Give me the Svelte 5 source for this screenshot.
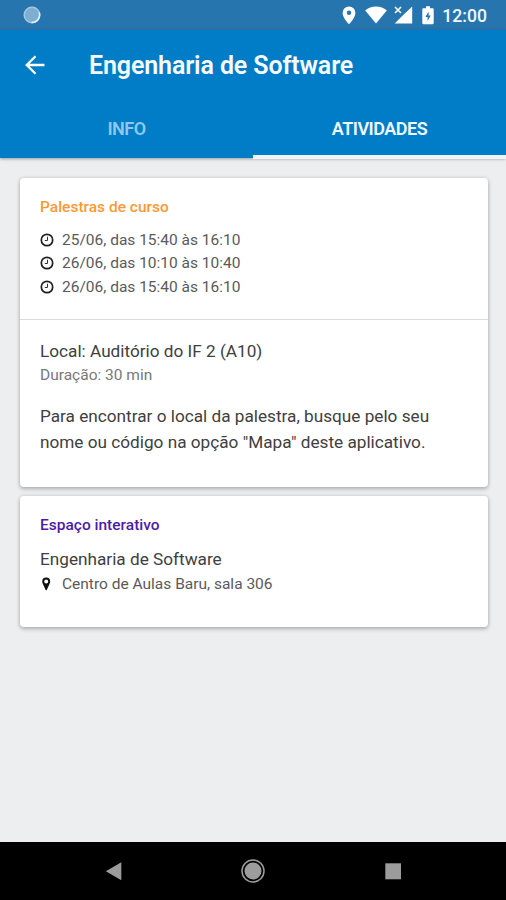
<script>
  const tabs = [
    { id: 'info', label: 'INFO' },
    { id: 'atividades', label: 'ATIVIDADES' }
  ];
  let active = $state('atividades');

  const times = [
    '25/06, das 15:40 às 16:10',
    '26/06, das 10:10 às 10:40',
    '26/06, das 15:40 às 16:10'
  ];
</script>

<div class="screen">
  <div class="status">
    <svg class="spinner" viewBox="0 0 18 18">
      <circle cx="9" cy="9" r="7.8" fill="#7eaed3" stroke="#a6c7e0" stroke-width="1.4" />
      <path d="M16.2 6.500A7.700 7.700 0 0 1 8.500 16.600" fill="none" stroke="#e2eff8" stroke-width="1.500" />
    </svg>
    <div class="status-icons">
      <svg width="14" height="19" viewBox="0 0 14 19">
        <path fill="#fff" fill-rule="evenodd" d="M7 .5A6.400 6.400 0 0 0 .6 6.900C.6 11.500 7 18.300 7 18.300s6.400-6.800 6.400-11.400A6.400 6.400 0 0 0 7 .5zm0 4.100a2.200 2.200 0 1 1 0 4.400 2.200 2.200 0 0 1 0-4.400z" />
      </svg>
      <svg class="wifi" width="22" height="18" viewBox="0 0 22 18">
        <path fill="#fff" d="M11 17.500.2 4.400C3.100 1.800 7 .5 11 .5s7.900 1.300 10.800 3.900z" />
      </svg>
      <svg class="signal" width="19" height="18" viewBox="0 0 19 18">
        <path fill="#fff" d="M18.200.5v17H.7l8.500-8.500z" />
        <path stroke="#fff" stroke-width="1.600" d="m1 1 6 6m0-6L1 7" />
      </svg>
      <svg class="battery" width="12" height="19" viewBox="0 0 12 19">
        <path fill="#fff" fill-rule="evenodd" d="M4 .3h4v1.900h2.500c.7 0 1.200.5 1.200 1.200v13.700c0 .7-.5 1.200-1.200 1.200h-9c-.7 0-1.200-.5-1.200-1.200V3.400c0-.7.500-1.200 1.200-1.200H4zm2.600 5.100-3.200 5.700h2.200v4l3.100-5.700H6.600z" />
      </svg>
      <span class="clock">12:00</span>
    </div>
  </div>

  <header>
    <div class="toolbar">
      <svg class="back" width="20" height="20" viewBox="0 0 20 20">
        <path d="M19.500 10H2M10.500 1.200 1.700 10l8.800 8.800" fill="none" stroke="#fff" stroke-width="2.300" />
      </svg>
      <h1>Engenharia de Software</h1>
    </div>
    <nav class="tabs">
      {#each tabs as tab}
        <button class:active={active === tab.id} onclick={() => (active = tab.id)}><span>{tab.label}</span></button>
      {/each}
    </nav>
  </header>

  <main>
    <section class="card talks">
      <div class="card-top">
        <h2 class="orange">Palestras de curso</h2>
        {#each times as time}
          <div class="row">
            <svg width="14" height="14" viewBox="0 0 14 14">
              <circle cx="7" cy="7" r="5.700" fill="none" stroke="#222" stroke-width="1.700" />
              <path d="M7.500 3.700v3.800H4.800" fill="none" stroke="#333" stroke-width="1" />
            </svg>
            <span class="time">{time}</span>
          </div>
        {/each}
      </div>
      <div class="card-body">
        <p class="place">Local: Auditório do IF 2 (A10)</p>
        <p class="duration">Duração: 30 min</p>
        <p class="note">Para encontrar o local da palestra, busque pelo seu<br />nome ou código na opção "Mapa" deste aplicativo.</p>
      </div>
    </section>

    <section class="card space">
      <h2 class="purple">Espaço interativo</h2>
      <p class="course">Engenharia de Software</p>
      <div class="row">
        <svg width="14" height="14" viewBox="0 0 14 14">
          <path fill="#111" fill-rule="evenodd" d="M6.200.5A4 4 0 0 0 2.200 4.500c0 .8.200 1.500.5 2l2.800 6.200c.3.700 1.100.7 1.400 0l2.800-6.200c.3-.5.500-1.200.5-2a4 4 0 0 0-4-4zm0 2a2 2 0 1 1 0 4 2 2 0 0 1 0-4z" />
        </svg>
        <span class="room">Centro de Aulas Baru, sala 306</span>
      </div>
    </section>
  </main>

  <footer>
    <svg width="24" height="24" viewBox="0 0 24 24"><path fill="#9c9c9c" d="M20.300 3.300v18L4.800 12.300z" /></svg>
    <svg width="24" height="24" viewBox="0 0 24 24">
      <circle cx="12" cy="12" r="11" fill="none" stroke="#9c9c9c" stroke-width="1.500" />
      <circle cx="12" cy="12" r="8.500" fill="#9c9c9c" />
    </svg>
    <svg width="24" height="24" viewBox="0 0 24 24"><path fill="#9c9c9c" d="M4.300 4.300h15.700v16H4.300z" /></svg>
  </footer>
</div>

<style>
  :global(body) { margin: 0; background: #eceef0; }
  .screen { display: flex; flex-direction: column; width: 506px; height: 900px; overflow: hidden; background: #eceef0; font-family: Roboto, "Liberation Sans", sans-serif; color: #404040; }
  svg { display: block; flex: none; }
  h1, h2, p { margin: 0; }

  .status { display: flex; align-items: center; justify-content: space-between; box-sizing: border-box; height: 30px; padding: 0 19px 0 23px; background: #2775af; }
  .spinner { width: 18px; height: 18px; }
  .status-icons { display: flex; align-items: center; }
  .wifi { margin-left: 9px; }
  .signal { margin-left: 7px; }
  .battery { margin-left: 9px; }
  .clock { margin-left: 8px; padding-top: 2px; font-size: 17.600px; line-height: 22px; font-weight: 500; color: #f3f8fc; }

  header { position: relative; height: 128px; background: #007dc6; box-shadow: 0 1px 3px rgba(0, 0, 0, 0.35); }
  .toolbar { display: flex; align-items: center; height: 70px; padding-left: 25px; }
  .back { margin-bottom: 1px; }
  h1 { margin-left: 44px; padding-top: 1px; font-size: 25px; letter-spacing: -0.12px; font-weight: 600; color: #f6faff; white-space: nowrap; }
  .tabs { display: grid; grid-template-columns: 1fr 1fr; height: 59px; }
  .tabs button { border: 0; border-bottom: 4px solid transparent; padding: 2px 0 0; background: none; font: inherit; font-size: 18px; letter-spacing: -0.5px; font-weight: 600; color: #8fc8ed; }
  .tabs button.active { color: #f0f8ff; border-bottom-color: #f0f4f6; }

  main { flex: 1; padding: 20px 18px 0 20px; }
  .card { border-radius: 4px; background: #fff; box-shadow: 0 2px 4px rgba(0, 0, 0, 0.24), 0 0 4px rgba(0, 0, 0, 0.12); }
  .card-top { box-sizing: border-box; height: 142px; padding: 19px 20px 0; border-bottom: 1px solid #d9dcdd; }
  .card-body { box-sizing: border-box; height: 167px; padding: 19px 20px 0; }
  h2 { height: 20px; margin-bottom: 11px; font-size: 15.500px; line-height: 20px; font-weight: 500; }
  .orange { color: #fb9a32; }
  .purple { color: #4f1ba6; }
  .row { display: flex; align-items: center; gap: 8px; height: 23.500px; font-size: 15.500px; white-space: nowrap; color: #5a5a5a; }
  .place, .course { font-size: 17.200px; line-height: 24px; white-space: nowrap; }
  .duration { font-size: 15.500px; line-height: 24px; color: #787878; }
  .note { margin-top: 16px; font-size: 17.200px; line-height: 26px; white-space: nowrap; }
  .space { box-sizing: border-box; height: 131px; margin-top: 9px; padding: 19px 20px 0; }
  .course { padding-top: 1px; }
  .space .row { height: 26px; }

  footer { display: grid; grid-template-columns: repeat(3, 140px); justify-content: center; align-items: center; justify-items: center; box-sizing: border-box; height: 58px; background: #000; }
</style>
